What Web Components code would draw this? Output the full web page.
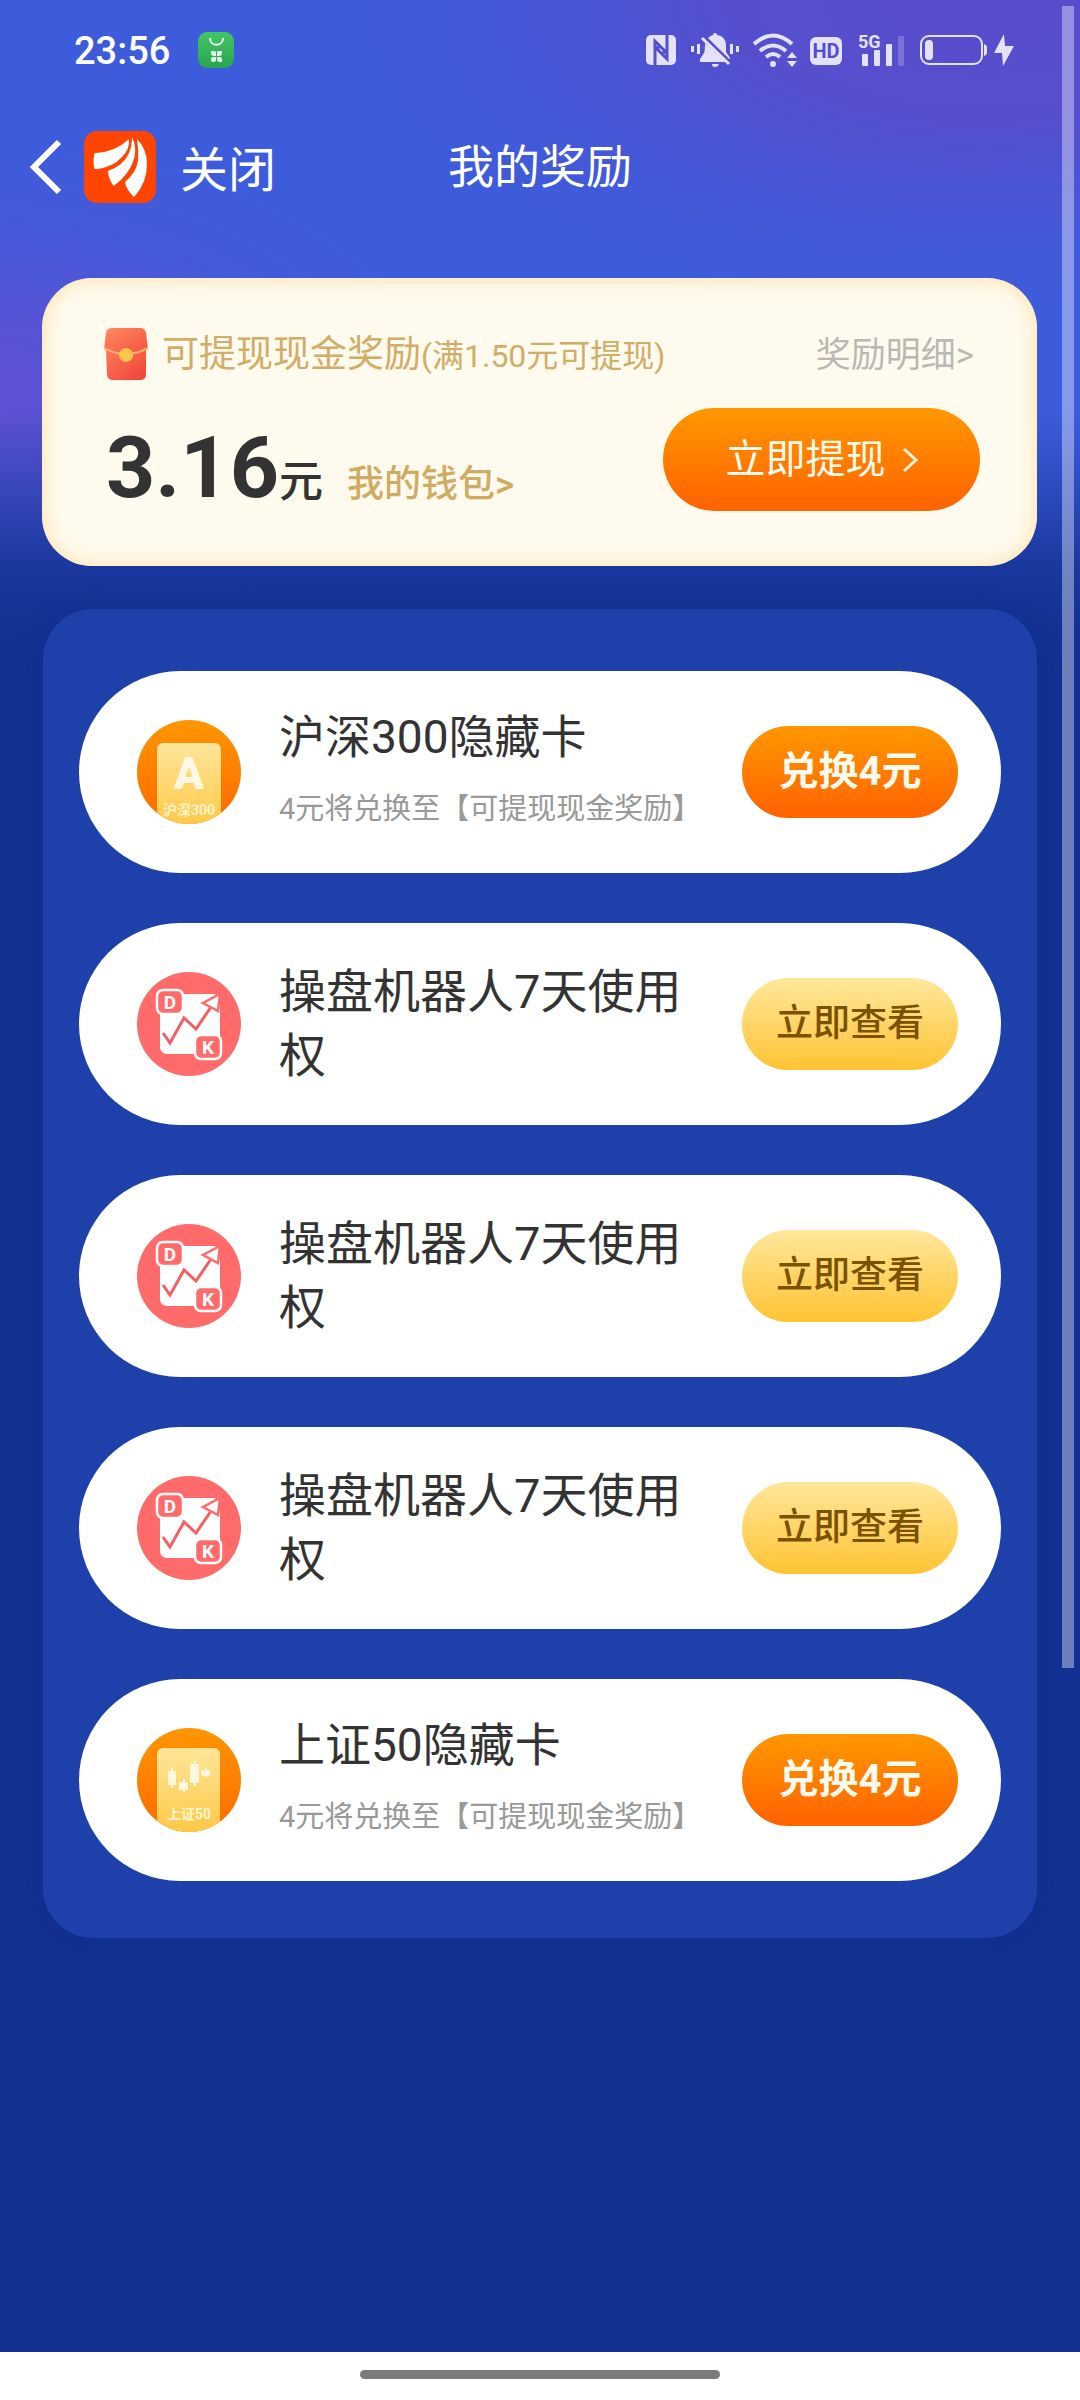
<!DOCTYPE html>
<html lang="zh-CN">
<head>
<meta charset="utf-8">
<meta name="viewport" content="width=device-width, initial-scale=1">
<title>我的奖励</title>
<style>
  body { margin: 0; font-family: Roboto, "Noto Sans CJK SC", sans-serif; }
</style>
</head>
<body>
<reward-page>
  <status-bar></status-bar>
  <nav-header heading="我的奖励"></nav-header>
  <cash-card amount="3.16"></cash-card>
  <reward-list>
    <reward-item heading="沪深300隐藏卡" note="4元将兑换至【可提现现金奖励】" action="兑换4元"><reward-icon kind="hs300"></reward-icon></reward-item>
    <reward-item heading="操盘机器人7天使用权" action="立即查看"><reward-icon kind="robot"></reward-icon></reward-item>
    <reward-item heading="操盘机器人7天使用权" action="立即查看"><reward-icon kind="robot"></reward-icon></reward-item>
    <reward-item heading="操盘机器人7天使用权" action="立即查看"><reward-icon kind="robot"></reward-icon></reward-item>
    <reward-item heading="上证50隐藏卡" note="4元将兑换至【可提现现金奖励】" action="兑换4元"><reward-icon kind="sz50"></reward-icon></reward-item>
  </reward-list>
  <home-bar slot="footer"></home-bar>
</reward-page>

<script>
const reset = `:host,*{box-sizing:border-box} svg{display:block;flex:none;overflow:visible} button{font-family:inherit;border:0;margin:0;padding:0;cursor:pointer} a{text-decoration:none} h1,h2,p{margin:0;font-weight:400}`;
function define(name, view) {
  customElements.define(name, class extends HTMLElement {
    connectedCallback() {
      if (this.shadowRoot) return;
      const root = this.attachShadow({ mode: 'open' });
      const t = document.createElement('template');
      t.innerHTML = view(this);
      root.append(t.content.cloneNode(true));
    }
  });
}

define('reward-page', () => `<style>${reset}
  :host{display:flex;flex-direction:column;min-height:100vh;background:#fff}
  main{flex:1;position:relative;padding-bottom:60px;
    background:
      linear-gradient(180deg,rgba(18,49,146,0) 410px,rgba(18,49,146,.4) 490px,rgba(18,49,146,.85) 570px,#123192 640px),
      radial-gradient(ellipse 480px 260px at -30px 400px,#6150d2 0,rgba(97,80,210,.7) 30%,rgba(97,80,210,.2) 70%,rgba(97,80,210,0) 100%),
      radial-gradient(ellipse 640px 310px at 980px 0,#594dcc 0,rgba(89,77,204,.85) 40%,rgba(89,77,204,.25) 75%,rgba(89,77,204,0) 100%),
      #3d5cdb}
  .thumb{position:absolute;top:6px;right:6px;width:12px;height:1662px;background:rgba(255,255,255,.38)}
</style><main><slot></slot><div class="thumb"></div></main><slot name="footer"></slot>`);

define('status-bar', () => `<style>${reset}
  :host{display:flex;align-items:center;height:100px;padding:0 66px 0 74px;color:#fff}
  time{font-size:38px;line-height:44px;font-weight:500;margin-right:28px;padding-top:2px}
  .icons{display:flex;align-items:center;margin-left:auto;color:#e4e1fa}
  .icons svg{fill:currentColor}
  .bell{margin-left:15px}.wifi{margin-left:14px}.hd{margin-left:13px}.sig{margin-left:16px}.bat{margin-left:15px}.bolt{margin-left:7px}
</style>
<time>23:56</time>
<svg width="36" height="36" viewBox="0 0 36 36"><defs><linearGradient id="g" x1="0" y1="0" x2="0" y2="1"><stop stop-color="#43c564"/><stop offset="1" stop-color="#29a551"/></linearGradient></defs><rect width="36" height="36" rx="9" fill="url(#g)"/><path d="M12 6c0 9 13 9 13 0" fill="none" stroke="#eaffee" stroke-width="2"/><g fill="#dff8e4"><path d="M13 19h4q1 0 1 2v3h-2q-3 0-3-3zM19 24v-4q0-1 2-1h3v2q0 3-3 3zM18 25v3q0 2-2 2h-1q-2 0-2-2v-1q0-2 2-2zM19 25h3q2 0 2 2v3h-2q-3 0-3-3z"/></g></svg>
<div class="icons">
<svg width="30" height="30" viewBox="0 0 30 30"><rect width="30" height="30" rx="5"/><path d="M9 30V6l9 9v4M21 0v24l-9-9v-4" fill="none" stroke="#544fcf" stroke-width="3"/></svg>
<svg class="bell" width="48" height="34" viewBox="0 0 48 34"><path d="M22 2q0-2 2-2t2 2q9 1 9 11v6l4 6v3L17 5q2-2 5-3zM14 10l21 19H9v-3l4-6q1-2 1-10zM21 31h7q-1 3-4 3t-3-3zM0 13h3v6H0zM6 11h3v10H6zM39 11h3v10h-3zM45 13h3v6h-3z"/><path d="M13 3l27 26" stroke="#544fcf" stroke-width="2"/><path d="M11 5l27 26" stroke="#e4e1fa" stroke-width="3"/></svg>
<svg class="wifi" width="44" height="34" viewBox="0 0 44 34"><g fill="none" stroke="currentColor" stroke-width="4"><path d="M1 11q19-17 38 0M7 18q13-11 26 0M13 24q7-6 14 0"/></g><circle cx="20" cy="31" r="3"/><path d="M39 19l5 6H34zM34 28h10l-5 6z"/></svg>
<svg class="hd" width="32" height="32" viewBox="0 0 32 32"><rect y="3" width="32" height="28" rx="6"/><text x="16" y="24" text-anchor="middle" font-size="20" font-weight="700" fill="#5350d0">HD</text></svg>
<svg class="sig" width="47" height="38" viewBox="0 0 47 38"><text x="0" y="17" font-size="18" font-weight="700">5G</text><rect x="4" y="23" width="6" height="12" rx="1"/><rect x="16" y="19" width="6" height="16" rx="1"/><rect x="28" y="13" width="6" height="22" rx="1"/><rect x="40" y="5" width="6" height="30" rx="1" opacity=".25"/></svg>
<svg class="bat" width="67" height="30" viewBox="0 0 67 30"><rect x="1" y="1" width="61" height="28" rx="8" fill="none" stroke="currentColor" stroke-width="2"/><rect x="5" y="5" width="8" height="20" rx="4"/><path d="M64 9q3 1 3 3v6q0 2-3 3z"/></svg>
<svg class="bolt" width="20" height="32" viewBox="0 0 20 32"><path d="M10 0L0 19h8l1 13L20 12h-9z"/></svg>
</div>`);

define('nav-header', el => `<style>${reset}
  :host{display:grid;grid-template-columns:1fr auto 1fr;align-items:center;height:134px;padding:0 30px;margin-bottom:44px;color:#fff}
  nav{display:flex;align-items:flex-end}
  button{background:none;color:inherit}
  .back{align-self:center}
  .logo{margin-left:23px}
  .close{font-size:48px;line-height:64px;margin-left:24px}
  h1{font-size:46px;line-height:72px}
</style>
<nav><button class="back" aria-label="返回"><svg width="31" height="54" viewBox="0 0 31 54"><path d="M29 2L4 27l25 25" fill="none" stroke="#fff" stroke-width="6"/></svg></button>
<svg class="logo" width="72" height="72" viewBox="0 0 72 72"><rect width="72" height="72" rx="13" fill="#ff4500"/><g fill="#fff"><path d="M10 24q0-2 2-2Q31 21 45 8q1 10-7 18-9 10-25 12-3 1-3-2-1-6 0-12z"/><path d="M48 6q6 12 1 25-5 13-18 23-1 1-2 0-5-7-5-14 16-6 21-18 3-7 3-16z"/><path d="M53 8q10 10 10 25 0 18-12 32-1 1-2 0-7-7-8-14 11-9 13-21 1-11-1-22z"/></g></svg>
<button class="close">关闭</button></nav>
<h1>${el.getAttribute('heading')}</h1>`);

define('cash-card', el => `<style>${reset}
  :host{display:flex;flex-direction:column;gap:28px;margin:0 43px 43px 42px;padding:50px 57px 55px 62px;border-radius:50px;background:#fffaee;box-shadow:inset 0 0 20px #ffdfa4}
  .row{display:flex;align-items:center;justify-content:space-between}
  .top{height:52px}
  .label{display:flex;align-items:center;color:#d2ad67}
  .label svg{margin-right:14px}
  h2{font-size:37px;line-height:52px;padding-top:2px}
  small{font-size:32px}
  .detail{color:#bbb8b4;font-size:35px;line-height:52px;margin-right:6px;padding-top:4px}
  .bottom{align-items:flex-end}
  .sum{display:flex;align-items:baseline;color:#333;line-height:1;margin-left:2px}
  .sum b{font-size:86px}
  .sum span{font-size:44px;font-weight:500}
  .sum a{color:#d0ac63;font-size:37px;font-weight:500;margin-left:24px}
  .cash{display:flex;align-items:center;justify-content:center;gap:16px;width:317px;height:103px;border-radius:52px;color:#fffaee;font-size:40px;line-height:60px;background:linear-gradient(#ff9800,#ff6200)}
</style>
<div class="row top"><div class="label">
<svg width="44" height="52" viewBox="0 0 44 52"><defs><linearGradient id="e" x1="0" y1="0" x2="1" y2="1"><stop stop-color="#ff7a58"/><stop offset="1" stop-color="#ef4238"/></linearGradient><linearGradient id="f" x1="0" y1="0" x2="1" y2="1"><stop stop-color="#ff8a62"/><stop offset="1" stop-color="#f3503d"/></linearGradient></defs><path d="M2 20h40v26q0 6-6 6H9q-6 0-6-6z" fill="url(#e)"/><path d="M8 0h28q5 0 6 5l2 16q-22 13-44 0L2 5q1-5 6-5z" fill="url(#f)"/><path d="M0 20q22 12 44 0" fill="none" stroke="#ffb070" stroke-width="2"/><circle cx="22" cy="27" r="7" fill="#ffc64a"/></svg>
<h2>可提现现金奖励<small>(满1.50元可提现)</small></h2></div><a class="detail" href="#">奖励明细&gt;</a></div>
<div class="row bottom"><div class="sum"><b>${el.getAttribute('amount')}</b><span>元</span><a href="#">我的钱包&gt;</a></div>
<button class="cash">立即提现<svg width="16" height="26" viewBox="0 0 16 26"><path d="M2 2l12 11L2 24" fill="none" stroke="#fff0d8" stroke-width="3"/></svg></button></div>`);

define('reward-list', () => `<style>${reset}
  :host{display:flex;flex-direction:column;gap:50px;margin:0 43px;padding:62px 36px 57px;border-radius:50px;background:#1e40aa;box-shadow:0 0 24px rgba(12,34,120,.25)}
</style><slot></slot>`);

define('reward-item', el => {
  const note = el.getAttribute('note');
  return `<style>${reset}
  :host{display:flex;align-items:center;height:202px;padding:0 43px 0 58px;border-radius:101px;background:#fff}
  .text{flex:1;margin:0 52px 0 38px}
  h2{font-size:47px;line-height:64px;color:#333}
  .noted h2{font-size:46px}
  .noted{margin-right:0;padding-bottom:8px;white-space:nowrap}
  p{font-size:29px;line-height:44px;margin-top:18px;color:#999}
  button{width:216px;height:92px;border-radius:46px;font-size:37px;line-height:56px;font-weight:500;color:#7a5200;background:linear-gradient(#ffe79c,#ffc333)}
  button.main{font-size:40px;color:#fffaee;font-weight:700;background:linear-gradient(#ff9800,#ff6200)}
</style>
<slot></slot><div class="text ${note ? 'noted' : ''}"><h2>${el.getAttribute('heading')}</h2>${note ? `<p>${note}</p>` : ''}</div>
<button class="${note ? 'main' : ''}">${el.getAttribute('action')}</button>`;
});

const art = {
  hs300: `<rect width="104" height="104" fill="url(#o)"/><rect x="20" y="23" width="64" height="90" rx="6" fill="url(#y)"/><text x="52" y="69" text-anchor="middle" font-size="44" font-weight="900" fill="#fff8e4">A</text><text x="52" y="95" text-anchor="middle" font-size="14" font-weight="700" fill="#fff3c8">沪深300</text>`,
  sz50: `<rect width="104" height="104" fill="url(#o)"/><rect x="20" y="20" width="63" height="90" rx="6" fill="url(#y)"/><g fill="#fff8dc"><rect x="31" y="43" width="8" height="14" rx="1"/><path d="M34 40h2v20h-2zM46 51h2v13h-2zM57 33h2v25h-2zM68 40h2v9h-2z"/><rect x="42" y="54" width="9" height="8" rx="1"/><rect x="53" y="36" width="9" height="19" rx="1"/><rect x="64" y="42" width="9" height="6" rx="2"/></g><text x="52" y="91" text-anchor="middle" font-size="14" font-weight="700" fill="#fff6d2">上证50</text>`,
  robot: `<rect width="104" height="104" fill="#ff6b6b"/><rect x="23" y="22" width="60" height="60" rx="7" fill="#fff"/><path d="M26 61l7 10 14-25 12 11 15-22" fill="none" stroke="#f45f63" stroke-width="3"/><path d="M83 22l-2 17-15-8z" fill="#fff" stroke="#ff6b6b" stroke-width="2.5"/><rect x="20" y="18" width="26" height="24" rx="6" fill="#ff6b6b" stroke="#fff" stroke-width="2.5"/><rect x="58" y="63" width="26" height="24" rx="6" fill="#ff6b6b" stroke="#fff" stroke-width="2.5"/><g font-size="19" font-weight="700" fill="#fff" text-anchor="middle"><text x="33" y="37">D</text><text x="71" y="82">K</text></g>`
};
define('reward-icon', el => `<style>${reset}
  :host{display:block;flex:none;width:104px;height:104px;border-radius:50%;overflow:hidden}
</style><svg width="104" height="104" viewBox="0 0 104 104"><defs><linearGradient id="o" x1="0" y1="0" x2="0" y2="1"><stop stop-color="#ff9600"/><stop offset="1" stop-color="#ff6a00"/></linearGradient><linearGradient id="y" x1="0" y1="0" x2="0" y2="1"><stop stop-color="#ffe59a"/><stop offset="1" stop-color="#ffc640"/></linearGradient></defs>${art[el.getAttribute('kind')]}</svg>`);

define('home-bar', () => `<style>${reset}
  :host{display:flex;justify-content:center;height:48px;padding-top:18px;background:#fff}
  div{width:33.33%;height:9px;border-radius:5px;background:#7b7b7b}
</style><div></div>`);
</script>
</body>
</html>
